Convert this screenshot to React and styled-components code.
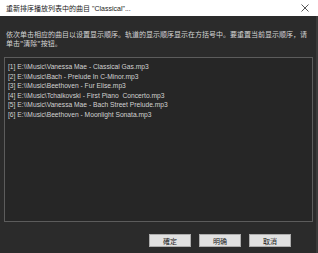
import React from 'react';
import styled, { createGlobalStyle } from 'styled-components';

const GlobalStyle = createGlobalStyle`
  html, body {
    margin: 0;
    padding: 0;
    background: #2b2b2b;
  }
  * {
    box-sizing: border-box;
  }
`;

const Window = styled.div`
  width: 318px;
  height: 253px;
  display: flex;
  flex-direction: column;
  font-family: "Liberation Sans", "Noto Sans CJK SC", sans-serif;
`;

const TitleBar = styled.div`
  height: 16px;
  flex-shrink: 0;
  background: #ffffff;
  display: flex;
  align-items: center;
  justify-content: space-between;
  padding-left: 6px;
`;

const Title = styled.span`
  font-size: 7px;
  color: #1a1a1a;
  white-space: nowrap;
`;

const CloseButton = styled.div`
  width: 26px;
  height: 16px;
  display: flex;
  align-items: center;
  justify-content: center;
`;

const Body = styled.div`
  flex: 1;
  display: flex;
  flex-direction: column;
  background: #2b2b2b;
  border-right: 2px solid #3a3a3a;
  padding: 14px 3px 0 4px;
`;

const Instruction = styled.p`
  margin: 0 0 0 2px;
  font-family: "Noto Sans CJK SC", sans-serif;
  font-size: 7px;
  line-height: 8.5px;
  color: #d4d4d4;
`;

const TrackList = styled.ul`
  list-style: none;
  margin: 10px 0 0;
  padding: 4px 3px;
  height: 165px;
  background: #262626;
  border: 1px solid #5c5c5c;
`;

const TrackItem = styled.li`
  font-size: 6.7px;
  line-height: 9.5px;
  color: #d2d2d2;
  white-space: pre;
`;

const ButtonRow = styled.div`
  display: flex;
  justify-content: flex-end;
  gap: 8px;
  margin-top: 12px;
  padding-right: 22px;
`;

const Button = styled.button`
  width: 42px;
  height: 13px;
  padding: 0;
  background: #e1e1e1;
  border: 1px solid #adadad;
  border-radius: 0;
  font-family: "Noto Sans CJK SC", sans-serif;
  font-size: 7px;
  color: #1a1a1a;
  display: flex;
  align-items: center;
  justify-content: center;
`;

const tracks = [
  'E:\\\\Music\\Vanessa Mae - Classical Gas.mp3',
  'E:\\\\Music\\Bach - Prelude In C-Minor.mp3',
  'E:\\\\Music\\Beethoven - Fur Elise.mp3',
  'E:\\\\Music\\Tchaikovski - First Piano  Concerto.mp3',
  'E:\\\\Music\\Vanessa Mae - Bach Street Prelude.mp3',
  'E:\\\\Music\\Beethoven - Moonlight Sonata.mp3',
];

const App = () => (
  <>
    <GlobalStyle />
    <Window>
      <TitleBar>
        <Title>重新排序播放列表中的曲目 "Classical"...</Title>
        <CloseButton>
          <svg width="8" height="8" viewBox="0 0 8 8">
            <path d="M0.5 0.5 L7.5 7.5 M7.5 0.5 L0.5 7.5" stroke="#444" strokeWidth="0.9" />
          </svg>
        </CloseButton>
      </TitleBar>
      <Body>
        <Instruction>
          依次单击相应的曲目以设置显示顺序。轨道的显示顺序显示在方括号中。要重置当前显示顺序，请单击"清除"按钮。
        </Instruction>
        <TrackList>
          {tracks.map((t, i) => (
            <TrackItem key={i}>[{i + 1}] {t}</TrackItem>
          ))}
        </TrackList>
        <ButtonRow>
          <Button>確定</Button>
          <Button>明确</Button>
          <Button>取消</Button>
        </ButtonRow>
      </Body>
    </Window>
  </>
);

export default App;
